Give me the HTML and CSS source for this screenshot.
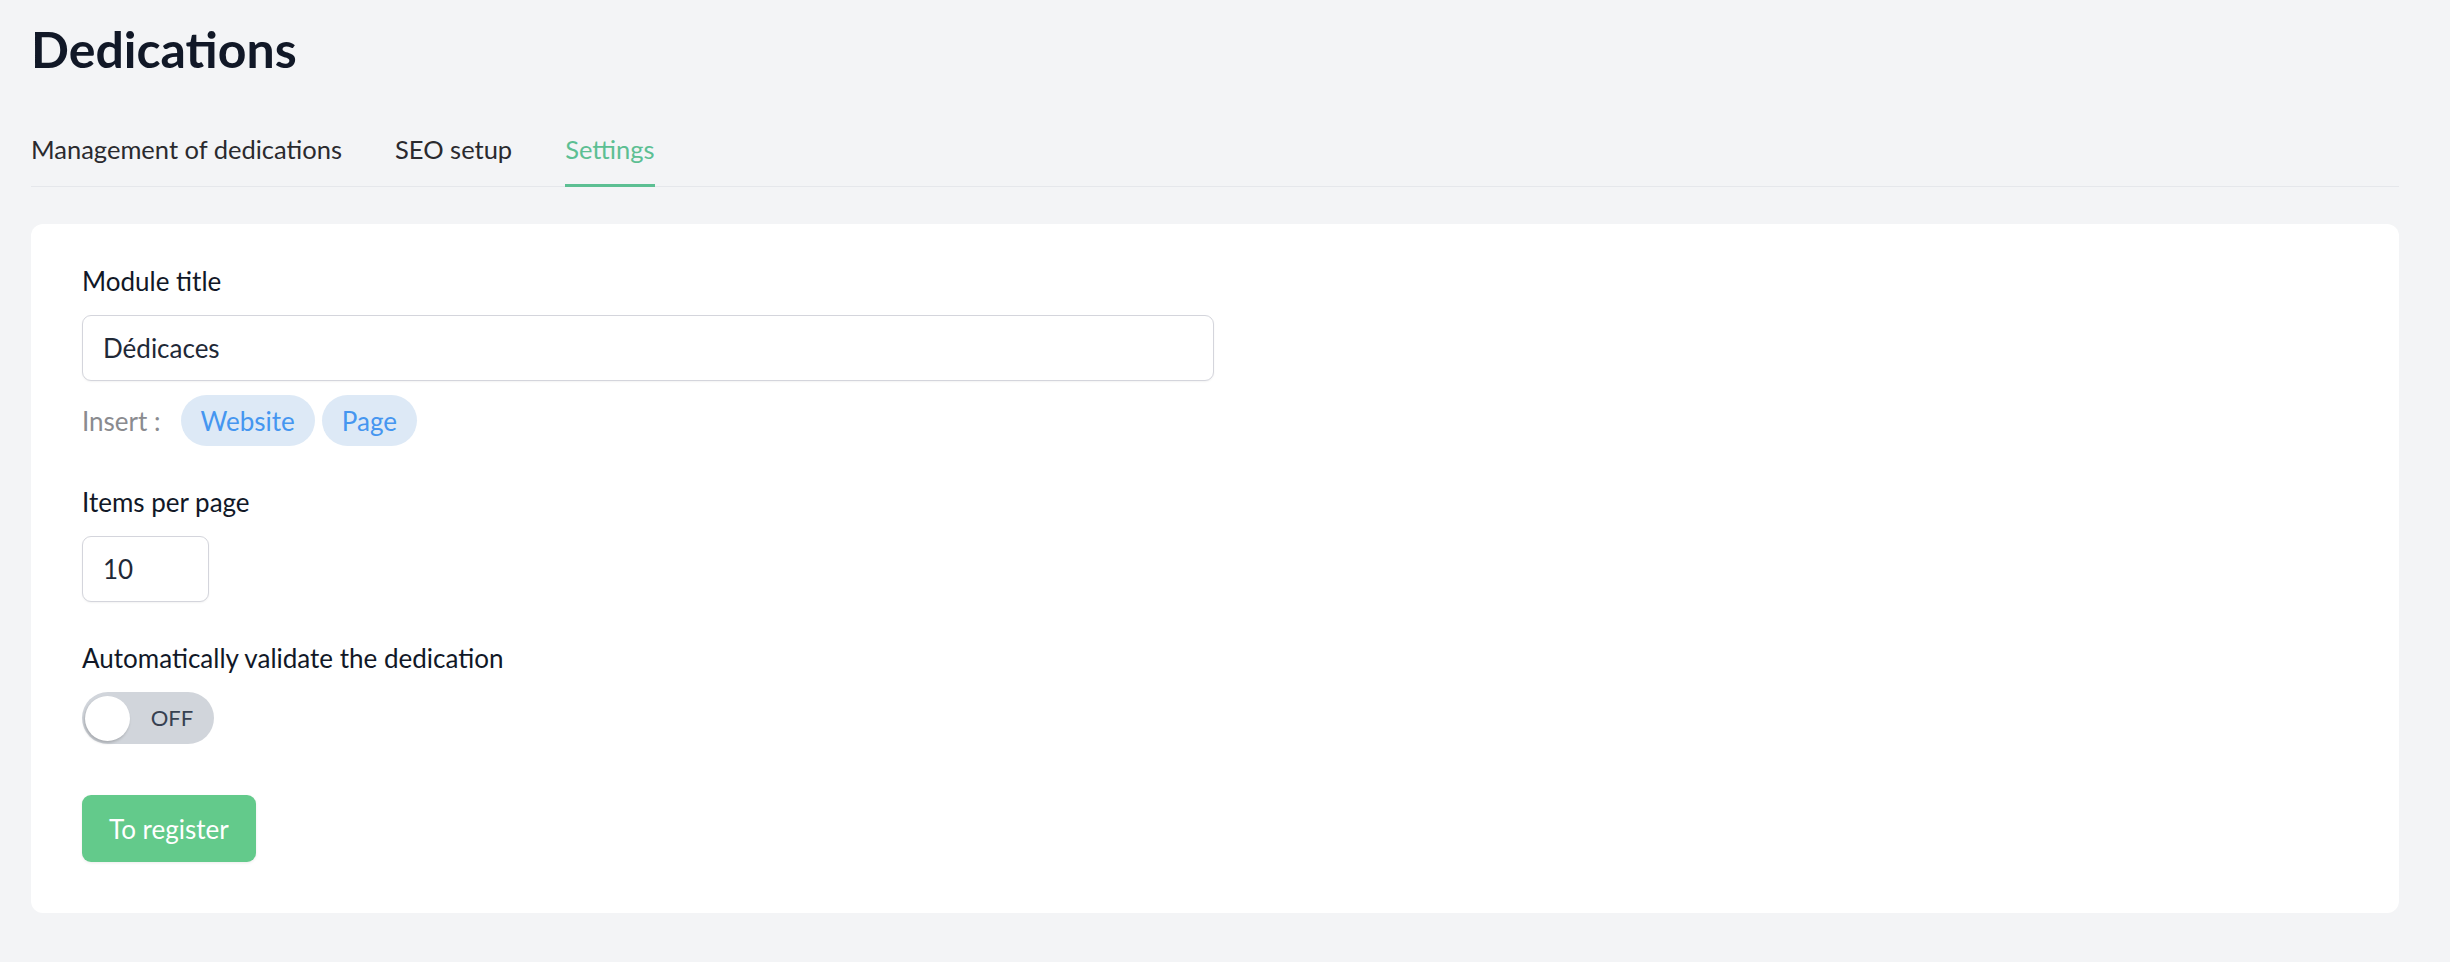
FILE: index.html
```html
<!DOCTYPE html>
<html lang="en">
<head>
  <meta charset="UTF-8" />
  <meta name="viewport" content="width=device-width, initial-scale=1.0" />
  <title>Dedications</title>
  <link rel="stylesheet" href="styles.css">
</head>
<body>

  <div class="page">
    <h1 class="page-title">Dedications</h1>

    <nav class="tabs">
      <a class="tab" href="#">Management of dedications</a>
      <a class="tab" href="#">SEO setup</a>
      <a class="tab active" href="#">Settings</a>
    </nav>

    <div class="card">
      <form class="settings-form" action="#" method="POST">

        <div class="field">
          <label for="title">Module title</label>
          <input type="text" id="title" class="text-input wide" value="Dédicaces" />
          <div class="insert-row">
            <span class="insert-label">Insert :</span>
            <button type="button" class="pill">Website</button>
            <button type="button" class="pill">Page</button>
          </div>
        </div>

        <div class="field">
          <label for="per-page">Items per page</label>
          <input type="text" id="per-page" class="text-input small" value="10" />
        </div>

        <div class="field">
          <label>Automatically validate the dedication</label>
          <button type="button" class="toggle">
            <span class="knob"></span>
            <span class="toggle-text">OFF</span>
          </button>
        </div>

        <button type="submit" class="submit-btn">To register</button>
      </form>
    </div>
  </div>

</body>
</html>
```

FILE: styles.css
```css
body {
  font-family: Lato, "Open Sans", sans-serif;
  background-color: #f3f4f6;
  color: #111827;
  margin: 0;
}

.page {
  padding: 19px 51px 40px 31px;
}

.page-title {
  margin: 0;
  font-size: 50px;
  line-height: 60px;
  font-weight: 700;
  color: #111827;
}

.tabs {
  display: flex;
  gap: 53px;
  margin-top: 53px;
  border-bottom: 1px solid #e5e7eb;
}

.tab {
  font-size: 25.5px;
  line-height: 34px;
  color: #2a2a2e;
  text-decoration: none;
  padding-bottom: 18px;
  border-bottom: 3px solid transparent;
  margin-bottom: -1px;
}

.tab.active {
  color: #5cbf93;
  border-bottom-color: #5cbf93;
}

.card {
  background-color: #fff;
  border-radius: 12px;
  margin-top: 37px;
  padding: 39px 51px 51px;
}

.settings-form {
  display: flex;
  flex-direction: column;
  align-items: flex-start;
}

.field {
  display: flex;
  flex-direction: column;
  align-items: flex-start;
  margin-bottom: 38px;
}

.field:nth-child(3) {
  margin-bottom: 51px;
}

.field label {
  font-size: 26px;
  line-height: 37px;
  color: #111827;
  margin-bottom: 15px;
}

.text-input {
  box-sizing: border-box;
  height: 66px;
  padding: 0 20px;
  font-family: inherit;
  font-size: 26px;
  color: #1f2937;
  background: #fff;
  border: 1px solid #d4d5dc;
  border-radius: 9px;
  box-shadow: 0 1px 2px rgba(0, 0, 0, 0.05);
  outline: none;
}

.text-input.wide {
  width: 1132px;
}

.text-input.small {
  width: 127px;
}

.insert-row {
  display: flex;
  align-items: center;
  gap: 7px;
  margin-top: 14px;
}

.insert-label {
  font-size: 26px;
  color: #8a8b8f;
  margin-right: 13px;
}

.pill {
  height: 51px;
  padding: 0 20px;
  border: none;
  border-radius: 26px;
  background-color: #dde9f6;
  color: #4596f0;
  font-family: inherit;
  font-size: 26px;
  cursor: pointer;
}

.toggle {
  position: relative;
  width: 132px;
  height: 52px;
  padding: 0;
  border: none;
  border-radius: 26px;
  background-color: #d1d5db;
  cursor: pointer;
}

.knob {
  position: absolute;
  left: 3px;
  top: 4px;
  width: 45px;
  height: 45px;
  border-radius: 50%;
  background-color: #fff;
  box-shadow: -1px 2px 3px rgba(0, 0, 0, 0.2);
}

.toggle-text {
  position: absolute;
  left: 48px;
  right: 0;
  top: 0;
  line-height: 52px;
  font-family: Lato, sans-serif;
  font-size: 22px;
  color: #374151;
  text-align: center;
}

.submit-btn {
  height: 67px;
  padding: 0 27px;
  border: none;
  border-radius: 9px;
  background-color: #63ca8b;
  color: #fff;
  font-family: inherit;
  font-size: 26px;
  cursor: pointer;
  box-shadow: 0 1px 3px rgba(0, 0, 0, 0.08);
}
```
